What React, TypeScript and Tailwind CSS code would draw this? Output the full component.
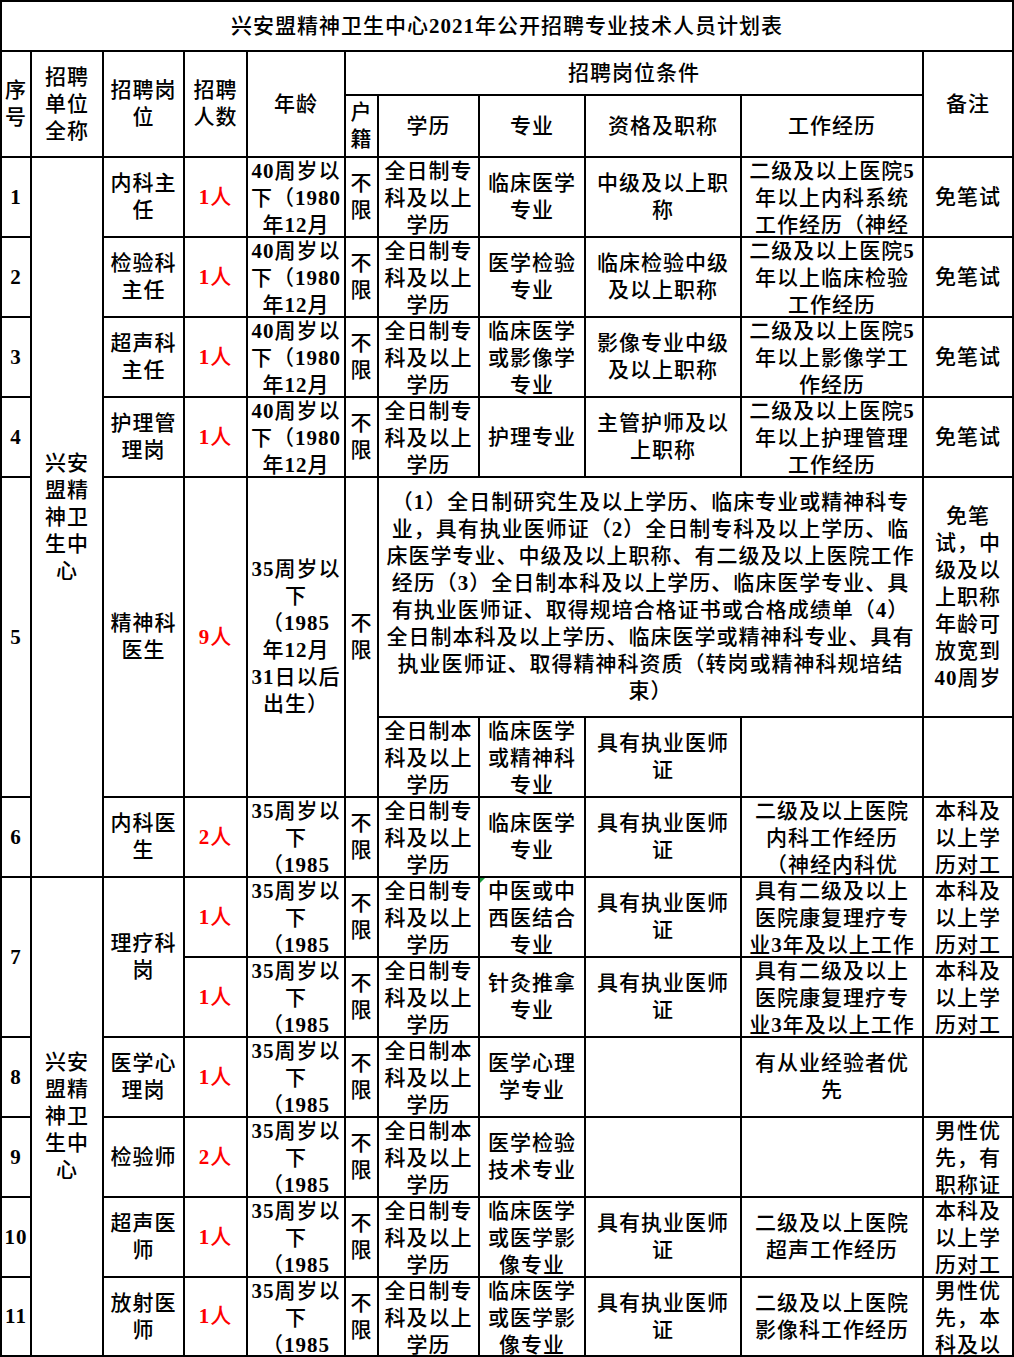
import React from 'react';

type CellProps = {
  lines?: string[];
  className?: string;
  red?: boolean;
  children?: React.ReactNode;
};

// digits are drawn bold, like the serif numbers of the sheet
function Line({ text }: { text: string }) {
  const parts = text.split(/(\d+)/);
  return (
    <div className="whitespace-nowrap">
      {parts.map((p, i) =>
        /^\d+$/.test(p) ? (
          <span key={i} className="font-bold">
            {p}
          </span>
        ) : (
          <span key={i}>{p}</span>
        )
      )}
    </div>
  );
}

// one table cell: text is centred, and when it is too tall it sits at the top and gets cut off
function Cell({ lines = [], className = '', red = false, children }: CellProps) {
  return (
    <div className={`relative flex flex-col overflow-hidden bg-white ${className}`}>
      <div className={`my-auto text-center leading-[27px] ${red ? 'text-[#ff0000]' : 'text-black'}`}>
        {lines.map((l, i) => (
          <Line key={i} text={l} />
        ))}
      </div>
      {children}
    </div>
  );
}

const age40 = ['40周岁以', '下（1980', '年12月'];
const age35 = ['35周岁以', '下', '（1985'];
const buxian = ['不', '限'];
const zhuanke = ['全日制专', '科及以上', '学历'];
const benke = ['全日制本', '科及以上', '学历'];
const zhiye = ['具有执业医师', '证'];

export default function App() {
  return (
    <div className="w-[1014px] h-[1357px] overflow-hidden bg-white">
      <div className="grid w-[1014px] grid-cols-[28px_70px_79px_61px_96px_31px_99px_104px_154px_180px_88px] grid-rows-[48px_42px_60px_78px_78px_78px_78px_238px_78px_78px_78px_78px_78px_78px_78px_77px] gap-[2px] bg-black p-[2px] font-['Liberation_Serif','Noto_Sans_CJK_SC',serif] text-[21px] tracking-[1px] font-medium">
        {/* title */}
        <Cell className="col-span-11 text-[21px]" lines={['兴安盟精神卫生中心2021年公开招聘专业技术人员计划表']} />

        {/* header */}
        <Cell className="row-span-2" lines={['序', '号']} />
        <Cell className="row-span-2" lines={['招聘', '单位', '全称']} />
        <Cell className="row-span-2" lines={['招聘岗', '位']} />
        <Cell className="row-span-2" lines={['招聘', '人数']} />
        <Cell className="row-span-2" lines={['年龄']} />
        <Cell className="col-span-5" lines={['招聘岗位条件']} />
        <Cell className="row-span-2" lines={['备注']} />
        <Cell lines={['户', '籍']} />
        <Cell lines={['学历']} />
        <Cell lines={['专业']} />
        <Cell lines={['资格及职称']} />
        <Cell lines={['工作经历']} />

        {/* 1 */}
        <Cell lines={['1']} />
        <Cell className="row-span-7" lines={['兴安', '盟精', '神卫', '生中', '心']} />
        <Cell lines={['内科主', '任']} />
        <Cell red lines={['1人']} />
        <Cell lines={age40} />
        <Cell lines={buxian} />
        <Cell lines={zhuanke} />
        <Cell lines={['临床医学', '专业']} />
        <Cell lines={['中级及以上职', '称']} />
        <Cell lines={['二级及以上医院5', '年以上内科系统', '工作经历（神经']} />
        <Cell lines={['免笔试']} />

        {/* 2 */}
        <Cell lines={['2']} />
        <Cell lines={['检验科', '主任']} />
        <Cell red lines={['1人']} />
        <Cell lines={age40} />
        <Cell lines={buxian} />
        <Cell lines={zhuanke} />
        <Cell lines={['医学检验', '专业']} />
        <Cell lines={['临床检验中级', '及以上职称']} />
        <Cell lines={['二级及以上医院5', '年以上临床检验', '工作经历']} />
        <Cell lines={['免笔试']} />

        {/* 3 */}
        <Cell lines={['3']} />
        <Cell lines={['超声科', '主任']} />
        <Cell red lines={['1人']} />
        <Cell lines={age40} />
        <Cell lines={buxian} />
        <Cell lines={zhuanke} />
        <Cell lines={['临床医学', '或影像学', '专业']} />
        <Cell lines={['影像专业中级', '及以上职称']} />
        <Cell lines={['二级及以上医院5', '年以上影像学工', '作经历']} />
        <Cell lines={['免笔试']} />

        {/* 4 */}
        <Cell lines={['4']} />
        <Cell lines={['护理管', '理岗']} />
        <Cell red lines={['1人']} />
        <Cell lines={age40} />
        <Cell lines={buxian} />
        <Cell lines={zhuanke} />
        <Cell lines={['护理专业']} />
        <Cell lines={['主管护师及以', '上职称']} />
        <Cell lines={['二级及以上医院5', '年以上护理管理', '工作经历']} />
        <Cell lines={['免笔试']} />

        {/* 5 */}
        <Cell className="row-span-2" lines={['5']} />
        <Cell className="row-span-2" lines={['精神科', '医生']} />
        <Cell className="row-span-2" red lines={['9人']} />
        <Cell className="row-span-2" lines={['35周岁以', '下', '（1985', '年12月', '31日以后', '出生）']} />
        <Cell className="row-span-2" lines={buxian} />
        <Cell
          className="col-span-4"
          lines={[
            '（1）全日制研究生及以上学历、临床专业或精神科专',
            '业，具有执业医师证（2）全日制专科及以上学历、临',
            '床医学专业、中级及以上职称、有二级及以上医院工作',
            '经历（3）全日制本科及以上学历、临床医学专业、具',
            '有执业医师证、取得规培合格证书或合格成绩单（4）',
            '全日制本科及以上学历、临床医学或精神科专业、具有',
            '执业医师证、取得精神科资质（转岗或精神科规培结',
            '束）',
          ]}
        />
        <Cell lines={['免笔', '试，中', '级及以', '上职称', '年龄可', '放宽到', '40周岁']} />
        <Cell lines={benke} />
        <Cell lines={['临床医学', '或精神科', '专业']} />
        <Cell lines={zhiye} />
        <Cell />
        <Cell />

        {/* 6 */}
        <Cell lines={['6']} />
        <Cell lines={['内科医', '生']} />
        <Cell red lines={['2人']} />
        <Cell lines={age35} />
        <Cell lines={buxian} />
        <Cell lines={zhuanke} />
        <Cell lines={['临床医学', '专业']} />
        <Cell lines={zhiye} />
        <Cell lines={['二级及以上医院', '内科工作经历', '（神经内科优']} />
        <Cell lines={['本科及', '以上学', '历对工']} />

        {/* 7 */}
        <Cell className="row-span-2" lines={['7']} />
        <Cell className="row-span-6" lines={['兴安', '盟精', '神卫', '生中', '心']} />
        <Cell className="row-span-2" lines={['理疗科', '岗']} />
        <Cell red lines={['1人']} />
        <Cell lines={age35} />
        <Cell lines={buxian} />
        <Cell lines={zhuanke} />
        <Cell lines={['中医或中', '西医结合', '专业']}>
          <div className="absolute left-0 top-0 h-0 w-0 border-t-[5px] border-r-[5px] border-t-[#1a9b3c] border-r-transparent" />
        </Cell>
        <Cell lines={zhiye} />
        <Cell lines={['具有二级及以上', '医院康复理疗专', '业3年及以上工作']} />
        <Cell lines={['本科及', '以上学', '历对工']} />

        <Cell red lines={['1人']} />
        <Cell lines={age35} />
        <Cell lines={buxian} />
        <Cell lines={zhuanke} />
        <Cell lines={['针灸推拿', '专业']} />
        <Cell lines={zhiye} />
        <Cell lines={['具有二级及以上', '医院康复理疗专', '业3年及以上工作']} />
        <Cell lines={['本科及', '以上学', '历对工']} />

        {/* 8 */}
        <Cell lines={['8']} />
        <Cell lines={['医学心', '理岗']} />
        <Cell red lines={['1人']} />
        <Cell lines={age35} />
        <Cell lines={buxian} />
        <Cell lines={benke} />
        <Cell lines={['医学心理', '学专业']} />
        <Cell />
        <Cell lines={['有从业经验者优', '先']} />
        <Cell />

        {/* 9 */}
        <Cell lines={['9']} />
        <Cell lines={['检验师']} />
        <Cell red lines={['2人']} />
        <Cell lines={age35} />
        <Cell lines={buxian} />
        <Cell lines={benke} />
        <Cell lines={['医学检验', '技术专业']} />
        <Cell />
        <Cell />
        <Cell lines={['男性优', '先，有', '职称证']} />

        {/* 10 */}
        <Cell lines={['10']} />
        <Cell lines={['超声医', '师']} />
        <Cell red lines={['1人']} />
        <Cell lines={age35} />
        <Cell lines={buxian} />
        <Cell lines={zhuanke} />
        <Cell lines={['临床医学', '或医学影', '像专业']} />
        <Cell lines={zhiye} />
        <Cell lines={['二级及以上医院', '超声工作经历']} />
        <Cell lines={['本科及', '以上学', '历对工']} />

        {/* 11 */}
        <Cell lines={['11']} />
        <Cell lines={['放射医', '师']} />
        <Cell red lines={['1人']} />
        <Cell lines={age35} />
        <Cell lines={buxian} />
        <Cell lines={zhuanke} />
        <Cell lines={['临床医学', '或医学影', '像专业']} />
        <Cell lines={zhiye} />
        <Cell lines={['二级及以上医院', '影像科工作经历']} />
        <Cell lines={['男性优', '先，本', '科及以']} />
      </div>
    </div>
  );
}
